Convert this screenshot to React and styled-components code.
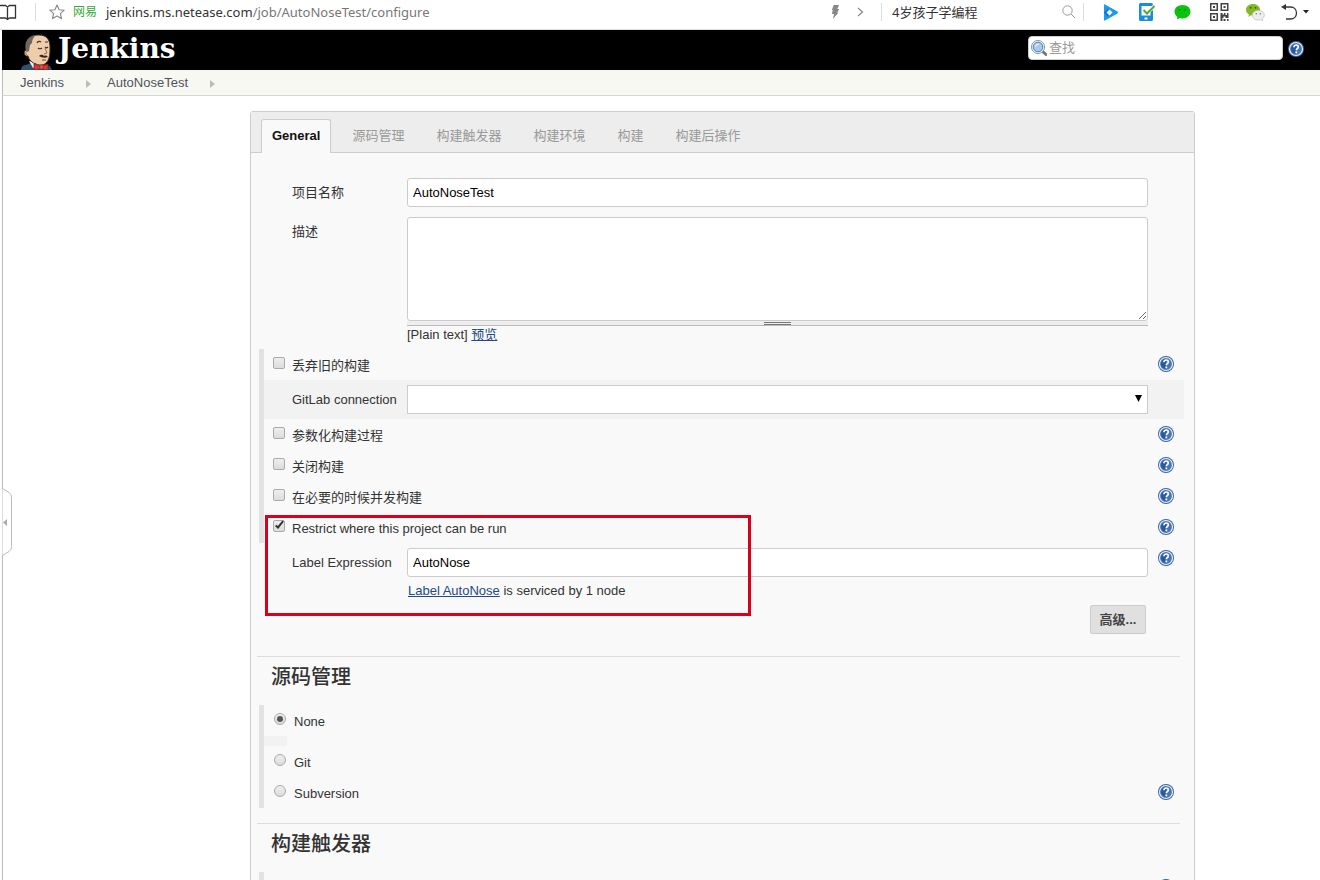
import React, { useState } from 'react';
import styled, { createGlobalStyle, css } from 'styled-components';

const GlobalStyle = createGlobalStyle`
  *, *::before, *::after { box-sizing: border-box; }
  body {
    margin: 0;
    background: #fff;
    color: #333;
    font: 13px/18px "Liberation Sans", "Noto Sans CJK SC", sans-serif;
  }
  button, input, select, textarea { font: inherit; color: inherit; margin: 0; }
  a { color: inherit; text-decoration: none; }
`;

/* ---------- page frame ---------- */

const Page = styled.div`
  height: 100vh;
  display: flex;
  flex-direction: column;
  overflow: hidden;
  position: relative;
`;

const Site = styled.div`
  flex: 1;
  min-height: 0;
  margin-left: 2px;
  display: flex;
  flex-direction: column;
`;

const Main = styled.main`
  flex: 1;
  min-height: 0;
  overflow: hidden;
  border-left: 1px solid #bbb;
  padding: 15px 125px 0 247px;
`;

const DrawerHandle = styled.button`
  position: absolute;
  left: 2px;
  top: 487px;
  padding: 0;
  border: 0;
  background: none;
  display: flex;
`;

/* ---------- browser bar ---------- */

const BrowserBar = styled.div`
  flex: none;
  height: 30px;
  padding-bottom: 5px;
  display: flex;
  align-items: center;
  border-bottom: 1px solid #ddd;
  color: #333;
  font-family: "Noto Sans", "Noto Sans CJK SC", sans-serif;

  svg { flex: none; display: block; }
`;

const BarButton = styled.button`
  flex: none;
  width: ${(p) => p.$width}px;
  padding: 0;
  border: 0;
  background: none;
  display: flex;
  align-items: center;
`;

const BarDivider = styled.span`
  flex: none;
  width: 1px;
  height: 18px;
  background: #ddd;
`;

const StarSlot = styled.span`
  padding-left: 13px;
`;

const LensSlot = styled.span`
  flex: 1;
  height: 18px;
  display: flex;
  align-items: center;
  border-right: 1px solid #ddd;
`;

const SiteTag = styled.span`
  color: #35a935;
  font-size: 12px;
  width: 33px;
`;

const Address = styled.div`
  flex: 1;
  color: #777;
  white-space: nowrap;

  b { font-weight: normal; color: #333; }
`;

const BarSearch = styled.input`
  width: 180px;
  padding: 0 0 0 10px;
  border: 0;
  outline: 0;
  background: none;
`;

const BarTools = styled.div`
  width: 236px;
  padding-left: 19px;
  display: flex;
  align-items: center;
`;

/* ---------- jenkins header ---------- */

const Header = styled.header`
  flex: none;
  height: 40px;
  background: #000;
  padding: 0 16px 0 18px;
  display: flex;
  align-items: center;
  justify-content: space-between;
`;

const Brand = styled.a`
  height: 40px;
  display: flex;
  align-items: flex-end;
  gap: 4px;
  color: #fff;
  font: bold 28px/42px "DejaVu Serif", serif;

  svg { display: block; }
`;

const HeaderTools = styled.div`
  display: flex;
  align-items: center;
  gap: 5px;
  padding-bottom: 4px;
`;

const SearchBox = styled.label`
  width: 255px;
  height: 24px;
  padding-left: 2px;
  display: flex;
  align-items: center;
  gap: 2px;
  border: 1px solid #ccc;
  border-radius: 4px;
  background: #fff;

  input {
    flex: 1;
    min-width: 0;
    border: 0;
    outline: 0;
    padding: 0;
    background: none;
  }
  input::placeholder { color: #999; opacity: 1; }
`;

const Breadcrumbs = styled.nav`
  flex: none;
  height: 26px;
  border-bottom: 1px solid #d3d7cf;
  border-left: 1px solid #bbb;
  background: #f8f8f3;
  padding-left: 17px;
  display: flex;
  align-items: center;
  color: #4d545d;

  svg { display: block; margin: 2px 16px 0 22px; }
`;

/* ---------- config panel ---------- */

const Panel = styled.div`
  min-height: 900px;
  border: 1px solid #ccc;
  border-radius: 3px 3px 0 0;
  background: #f9f9f9;
`;

const TabBar = styled.div`
  height: 41px;
  padding: 7px 10px 0;
  display: flex;
  gap: 10px;
  background: #ededed;
  border-bottom: 1px solid #ccc;
`;

const Tab = styled.button`
  height: 34px;
  padding: 0 10px 2px;
  white-space: nowrap;
  border: 1px solid transparent;
  border-bottom: 0;
  border-radius: 3px 3px 0 0;
  background: none;
  color: #999;
  ${(p) => p.$active && css`
    border-color: #ccc;
    background: #f9f9f9;
    color: #111;
    font-weight: bold;
  `}
`;

const Block = styled.div`
  margin: 0 10px 0 8px;
  border-left: 5px solid ${(p) => (p.$bar ? '#e2e2e2' : 'transparent')};
  padding-top: ${(p) => p.$top || 0}px;
  position: relative;
`;

const Row = styled.div`
  display: grid;
  grid-template-columns: 28px 115px 1fr 36px;
  align-items: start;
  min-height: 31px;
  margin-bottom: ${(p) => p.$gap || 0}px;
  ${(p) => p.$shaded && css`
    padding: 5px 0;
    background: #f2f2f2;
  `}
`;

const FieldLabel = styled.label`
  grid-column: 2;
  line-height: 29px;
  white-space: nowrap;
`;

const Field = styled.div`
  grid-column: 3;
`;

const control = css`
  display: block;
  width: 100%;
  border: 1px solid #ccc;
  border-radius: 3px;
  background: #fff;
  color: #000;
  outline: 0;
`;

const TextInput = styled.input`
  ${control}
  height: 29px;
  padding: 0 5px;
`;

const TextArea = styled.textarea`
  ${control}
  height: 104px;
  padding: 5px;
  resize: vertical;
`;

const SelectWrap = styled.div`
  position: relative;

  svg { position: absolute; right: 6px; top: 10px; pointer-events: none; }
`;

const Select = styled.select`
  ${control}
  appearance: none;
  height: 29px;
  border-radius: 0;
  padding: 0 20px 0 5px;
`;

const Grip = styled.div`
  height: 5px;
  display: flex;
  align-items: flex-end;
  justify-content: center;
  background: #eee;
  border-bottom: 1px solid #bbb;

  &::before {
    content: "";
    width: 27px;
    height: 3px;
    border: solid #777;
    border-width: 1px 0;
  }
`;

const Hint = styled.div`
  line-height: 18px;
  padding: ${(p) => (p.$spaced ? '5px 1px' : '0')};

  a { color: #204a87; text-decoration: underline; }
`;

const Choice = styled.label`
  grid-column: 1 / 4;
  height: 31px;
  padding: 2px 0 0 ${(p) => (p.$radio ? 10 : 9)}px;
  display: flex;
  align-items: center;
  gap: ${(p) => (p.$radio ? 8 : 7)}px;
`;

const Tick = styled.input`
  appearance: none;
  flex: none;
  width: 12px;
  height: 12px;
  margin: 0 0 6px;
  border: 1px solid #aaa;
  border-radius: ${(p) => (p.type === 'radio' ? '50%' : '2px')};
  background: linear-gradient(#eee, #dcdcdc);
  display: grid;
  place-items: center;

  &[type='checkbox']:checked::before {
    content: "";
    width: 9px;
    height: 4px;
    margin-bottom: 3px;
    border: solid #333;
    border-width: 0 0 2px 2px;
    transform: rotate(-50deg);
  }
  &[type='radio']:checked::before {
    content: "";
    width: 6px;
    height: 6px;
    border-radius: 50%;
    background: #555;
  }
`;

const HelpButton = styled.button`
  grid-column: 4;
  padding: ${(p) => p.$top || 0}px 0 0 ${(p) => (p.$flush ? 0 : 10)}px;
  border: 0;
  background: none;
  display: flex;
`;

const Highlight = styled.div`
  position: absolute;
  z-index: 1;
  left: 1px;
  top: 166px;
  width: 486px;
  height: 101px;
  border: 3px solid #d9001b;
  pointer-events: none;
`;

const Actions = styled.div`
  display: flex;
  justify-content: flex-end;
  padding: 0 38px 22px 0;
`;

const AdvancedButton = styled.button`
  width: 56px;
  height: 29px;
  padding: 0;
  border: 1px solid #ccc;
  border-radius: 2px;
  background: #e0e0e0;
  color: #444;
  font-weight: bold;
`;

const Section = styled.section`
  padding-bottom: 15px;
`;

const SectionTitle = styled.h2`
  margin: 0 14px 8px 6px;
  padding-left: 14px;
  border-top: 1px solid #ddd;
  font: 500 20px/40px "Liberation Sans", "Noto Sans CJK SC", sans-serif;
`;

const EmptyRow = styled.div`
  width: 23px;
  height: 10px;
  background: #f2f2f2;
`;

/* ---------- icons ---------- */

const HelpIcon = () => (
  <svg width="16" height="16" viewBox="0 0 16 16" aria-hidden="true">
    <circle cx="8" cy="8" r="8" fill="#3465a4" />
    <circle cx="8" cy="8" r="6.5" fill="#4a74b4" stroke="#e6eefa" strokeWidth="1.2" />
    <path d="M3 8a5 5 0 0 1 5-5v10a5 5 0 0 1-5-5Z" fill="#2c599c" />
    <path d="M5.9 6.2c0-1.5 1-2.2 2.2-2.2s2.2.8 2.2 2c0 1.6-2 1.7-2 3.3" fill="none" stroke="#fff" strokeWidth="1.6" />
    <rect x="7.4" y="10.5" width="1.8" height="1.8" fill="#fff" />
  </svg>
);

const Butler = () => (
  <svg width="34" height="36" viewBox="0 0 34 36" aria-hidden="true">
    <path d="M1 36c0-3 2-5 5-5l7-3 11 3 6 1 2 4Z" fill="#2f4f6b" />
    <path d="M9 27l4 7 8 1 3-5Z" fill="#f2f2f2" />
    <path d="M6 9C8 3 13 1 19 1c8 0 11 5 11 12 0 6 0 11-3 15-2 3-7 4-11 2-4-1-7-4-8-8-4 1-5-5-2-6Z" fill="#eecdaa" stroke="#3a302a" />
    <path d="M6 16C4 9 8 2 16 1c-3 3-4 5-4 8l-2 2-1 6-2 1Z" fill="#6d6862" />
    <path d="M17 9c1-2 3-2 4-1M25 8l3 0M18 14c1 1 3 1 4 0M25 13c1 1 2 1 3 0" fill="none" stroke="#4a352a" strokeWidth="1.2" />
    <path d="M25 14l2 5-3 1" fill="none" stroke="#9b6d50" />
    <path d="M19 22c2-2 4-1 5 0 2-1 3 0 4 1-3 1-6 1-9-1Z" fill="#39261d" />
    <path d="M22 26h4" stroke="#7a4030" />
    <path d="M8 17c-3-1-3 4 0 5" fill="none" stroke="#9b6d50" />
    <path d="M14 30l7 2 7-2v6h-3l-4-2-4 2h-3Z" fill="#d33833" stroke="#7d1512" strokeWidth=".7" />
    <path d="M20 31h3v4h-3Z" fill="#ef5a50" stroke="#7d1512" strokeWidth=".5" />
  </svg>
);

const MagnifierIcon = () => (
  <svg width="16" height="16" viewBox="0 0 16 16" aria-hidden="true">
    <path d="M10.5 10.5L15 14.5" stroke="#777" strokeWidth="3" strokeLinecap="round" />
    <circle cx="7" cy="7" r="6.5" fill="#fff" stroke="#7b93ad" />
    <circle cx="7" cy="7" r="4.8" fill="#a9c8ea" stroke="#4e7eb5" />
    <path d="M4.5 7A2.8 2.8 0 0 1 8 4.3" fill="none" stroke="#e5f1ff" strokeWidth="1.4" />
  </svg>
);

const CrumbArrow = () => (
  <svg width="5" height="8" viewBox="0 0 5 8" aria-hidden="true">
    <path d="M0 0l5 4-5 4Z" fill="#bbb" />
  </svg>
);

const BookIcon = () => (
  <svg width="17" height="18" viewBox="0 0 17 18" fill="none" stroke="#333" strokeWidth="1.3">
    <path d="M0 2.500h5.500L7.500 4l2-1.500h6v12.500h-6l-2 1.500-2-1.500H0M7.500 4v12" />
  </svg>
);

const StarIcon = () => (
  <svg width="16" height="16" viewBox="0 0 16 16" fill="none" stroke="#888" strokeWidth="1.1" strokeLinejoin="round">
    <path d="M8 1l2.100 4.700 5.100.5-3.800 3.400 1.100 5L8 12l-4.500 2.600 1.100-5L.8 6.200l5.100-.5Z" />
  </svg>
);

const BoltIcon = () => (
  <svg width="9" height="14" viewBox="0 0 10 14" preserveAspectRatio="none">
    <path d="M3 0h6L7 4h2L7 8h1L2 14l1.500-5H1l1-4H1Z" fill="#888" />
  </svg>
);

const ChevronIcon = () => (
  <svg width="7" height="10" viewBox="0 0 7 10" fill="none" stroke="#888" strokeWidth="1.2">
    <path d="M1 1l4.500 4L1 9" />
  </svg>
);

const LensIcon = () => (
  <svg width="14" height="14" viewBox="0 0 14 14" fill="none" stroke="#999">
    <circle cx="5.5" cy="5.5" r="4.7" />
    <path d="M9 9l4 4" />
  </svg>
);

const PlayIcon = () => (
  <svg width="16" height="17" viewBox="0 0 16 17">
    <path d="M1 1Q1 0 2 .5L14.500 7.500Q15.500 8.500 14.500 9.500L2 16.500Q1 17 1 16Z" fill="#1c9af0" />
    <path d="M1 8.500L5.500 4v9Z" fill="#0b73cc" />
    <path d="M6.500 5.500l3 3-3 3-3-3Z" fill="#fff" />
  </svg>
);

const PhoneIcon = () => (
  <svg width="18" height="18" viewBox="0 0 18 18">
    <path d="M2.500 0h11Q15 0 15 1.500L14 3H3.500v9.500h9V9L15 7v9.500Q15 18 13.500 18h-11Q1 18 1 16.500v-15Q1 0 2.500 0Z" fill="#168de2" />
    <path d="M5.500 7l3.500 3.500L16.500 3" fill="none" stroke="#55a832" strokeWidth="2" />
    <path d="M6.500 14.500h3v2h-3Z" fill="#fff" />
  </svg>
);

const BubbleIcon = () => (
  <svg width="17" height="15" viewBox="0 0 17 15">
    <path d="M8.500 0C13 0 16.500 2.800 16.500 6.500S13 13.500 8.500 13.500c-1 0-2-.1-2.800-.4L3 14.500l.3-2.500C1.500 10.500.500 8.500.500 6.500.500 2.800 4 0 8.500 0Z" fill="#09c40b" />
    <circle cx="5.700" cy="5" r="1" fill="#077d08" />
    <circle cx="11.300" cy="5" r="1" fill="#077d08" />
  </svg>
);

const QrIcon = () => (
  <svg width="19" height="18" viewBox="0 0 19 18" fill="#444">
    <path fillRule="evenodd" d="M0 0h8v8H0ZM1.500 1.500v5h5v-5ZM10.500 0h8v8h-8ZM12 1.500v5h5v-5ZM0 10h8v8H0ZM1.500 11.500v5h5v-5Z" />
    <path d="M3 3h2v2H3ZM13.500 3h2v2h-2ZM3 13h2v2H3ZM10.500 10h2v1.500h1.500V10h1.500v2H17v-2h1.500v5h-3v-1.500h-2V15h-1v3h-2ZM13.500 16h2v2h-2ZM17 16h1.500v2H17Z" />
  </svg>
);

const WeChatIcon = () => (
  <svg width="19" height="17" viewBox="0 0 19 17">
    <path d="M7 0c4 0 7 2.500 7 5.800S11 11.500 7 11.500l-2-.2L2.500 13l.4-2.500C1 9.500 0 7.700 0 5.800 0 2.500 3 0 7 0Z" fill="#84b928" />
    <circle cx="4.700" cy="3.800" r="1" fill="#3d6410" />
    <circle cx="9.500" cy="3.800" r="1" fill="#3d6410" />
    <path d="M12.300 6.500c3.500 0 6 2 6 4.700 0 1.500-.8 2.800-2 3.600l.3 1.900-2-1c-.7.2-1.500.3-2.300.3-3.400 0-6-2.100-6-4.800s2.600-4.700 6-4.700Z" fill="#eee" stroke="#bbb" strokeWidth=".7" />
    <circle cx="10.300" cy="9.700" r=".8" fill="#777" />
    <circle cx="14.300" cy="9.700" r=".8" fill="#777" />
  </svg>
);

const UndoIcon = () => (
  <svg width="17" height="17" viewBox="0 0 17 17">
    <path d="M3 3h6.500C13 3 15.500 5.500 15.500 9S13 15 9.500 15H5" fill="none" stroke="#333" strokeWidth="1.3" />
    <path d="M0 3l5-3v6Z" fill="#333" />
  </svg>
);

const CaretIcon = () => (
  <svg width="6" height="4" viewBox="0 0 6 4"><path d="M0 0h6L3 3.500Z" fill="#222" /></svg>
);

/* ---------- content ---------- */

const TABS = ['General', '源码管理', '构建触发器', '构建环境', '构建', '构建后操作'];

const TOOLS = [
  ['播放', PlayIcon, 35],
  ['手机', PhoneIcon, 36],
  ['消息', BubbleIcon, 36],
  ['二维码', QrIcon, 36],
  ['微信', WeChatIcon, 35],
  ['恢复', UndoIcon, 22],
  ['更多', CaretIcon, 6],
];

const Help = (props) => (
  <HelpButton type="button" aria-label="帮助" {...props}><HelpIcon /></HelpButton>
);

function CheckRow({ label, checked = false }) {
  const [on, setOn] = useState(checked);
  return (
    <Row>
      <Choice>
        <Tick type="checkbox" checked={on} onChange={() => setOn(!on)} />
        {label}
      </Choice>
      <Help $top={7} />
    </Row>
  );
}

function RadioRow({ label, value, onPick, help }) {
  return (
    <Row>
      <Choice $radio>
        <Tick type="radio" name="scm" checked={value === label} onChange={() => onPick(label)} />
        {label}
      </Choice>
      {help && <Help $top={7} />}
    </Row>
  );
}

function Browser() {
  return (
    <BrowserBar>
      <BarButton $width={35} aria-label="阅读"><BookIcon /></BarButton>
      <BarDivider />
      <BarButton $width={37} aria-label="收藏"><StarSlot><StarIcon /></StarSlot></BarButton>
      <SiteTag>网易</SiteTag>
      <Address><b>jenkins.ms.netease.com</b>/job/AutoNoseTest/configure</Address>
      <BarButton $width={26} aria-label="加速"><BoltIcon /></BarButton>
      <BarButton $width={24} aria-label="前往"><ChevronIcon /></BarButton>
      <BarDivider />
      <BarSearch aria-label="搜索" defaultValue="4岁孩子学编程" />
      <BarButton $width={22} aria-label="搜索"><LensSlot><LensIcon /></LensSlot></BarButton>
      <BarTools>
        {TOOLS.map(([name, Icon, width]) => (
          <BarButton key={name} $width={width} aria-label={name}><Icon /></BarButton>
        ))}
      </BarTools>
    </BrowserBar>
  );
}

export default function App() {
  const [tab, setTab] = useState('General');
  const [scm, setScm] = useState('None');

  return (
    <Page>
      <GlobalStyle />
      <Browser />
      <Site>
        <Header>
          <Brand href="#"><Butler />Jenkins</Brand>
          <HeaderTools>
            <SearchBox>
              <MagnifierIcon />
              <input placeholder="查找" aria-label="查找" />
            </SearchBox>
            <Help $flush $top={2} />
          </HeaderTools>
        </Header>
        <Breadcrumbs>
          <a href="#">Jenkins</a>
          <CrumbArrow />
          <a href="#">AutoNoseTest</a>
          <CrumbArrow />
        </Breadcrumbs>
        <Main>
          <Panel>
            <TabBar>
              {TABS.map((name) => (
                <Tab key={name} type="button" $active={name === tab} onClick={() => setTab(name)}>{name}</Tab>
              ))}
            </TabBar>

            <Block $top={25}>
              <Row $gap={8}>
                <FieldLabel htmlFor="name">项目名称</FieldLabel>
                <Field><TextInput id="name" defaultValue="AutoNoseTest" /></Field>
              </Row>
              <Row $gap={5}>
                <FieldLabel htmlFor="description">描述</FieldLabel>
                <Field>
                  <TextArea id="description" />
                  <Grip />
                  <Hint>[Plain text] <a href="#">预览</a></Hint>
                </Field>
              </Row>
            </Block>

            <Block $bar>
              <CheckRow label="丢弃旧的构建" />
              <Row $shaded>
                <FieldLabel htmlFor="gitlab">GitLab connection</FieldLabel>
                <Field>
                  <SelectWrap>
                    <Select id="gitlab"><option> </option></Select>
                    <svg width="7" height="7" viewBox="0 0 7 7" aria-hidden="true">
                      <path d="M0 0h7L3.500 7Z" fill="#000" />
                    </svg>
                  </SelectWrap>
                </Field>
              </Row>
              <CheckRow label="参数化构建过程" />
              <CheckRow label="关闭构建" />
              <CheckRow label="在必要的时候并发构建" />
              <CheckRow label="Restrict where this project can be run" checked />
              <Highlight />
            </Block>

            <Block $top={5}>
              <Row>
                <FieldLabel htmlFor="expression">Label Expression</FieldLabel>
                <Field>
                  <TextInput id="expression" defaultValue="AutoNose" />
                  <Hint $spaced><a href="#">Label AutoNose</a> is serviced by 1 node</Hint>
                </Field>
                <Help $top={2} />
              </Row>
              <Actions><AdvancedButton type="button">高级...</AdvancedButton></Actions>
            </Block>

            <Section>
              <SectionTitle>源码管理</SectionTitle>
              <Block $bar>
                <RadioRow label="None" value={scm} onPick={setScm} />
                <EmptyRow />
                <RadioRow label="Git" value={scm} onPick={setScm} />
                <RadioRow label="Subversion" value={scm} onPick={setScm} help />
              </Block>
            </Section>

            <Section>
              <SectionTitle>构建触发器</SectionTitle>
              <Block $bar>
                <Row><Help $top={7} /></Row>
              </Block>
            </Section>
          </Panel>
        </Main>
      </Site>
      <DrawerHandle type="button" aria-label="展开侧栏">
        <svg width="11" height="70" viewBox="0 0 11 70" aria-hidden="true">
          <path d="M.5 0v1.500L7 5.500q2.500 1.500 2.500 5v49q0 3.500-2.500 5L.5 68.500V70" fill="#fff" stroke="#bbb" />
          <path d="M5 32v7L1 35.500Z" fill="#aaa" />
        </svg>
      </DrawerHandle>
    </Page>
  );
}
